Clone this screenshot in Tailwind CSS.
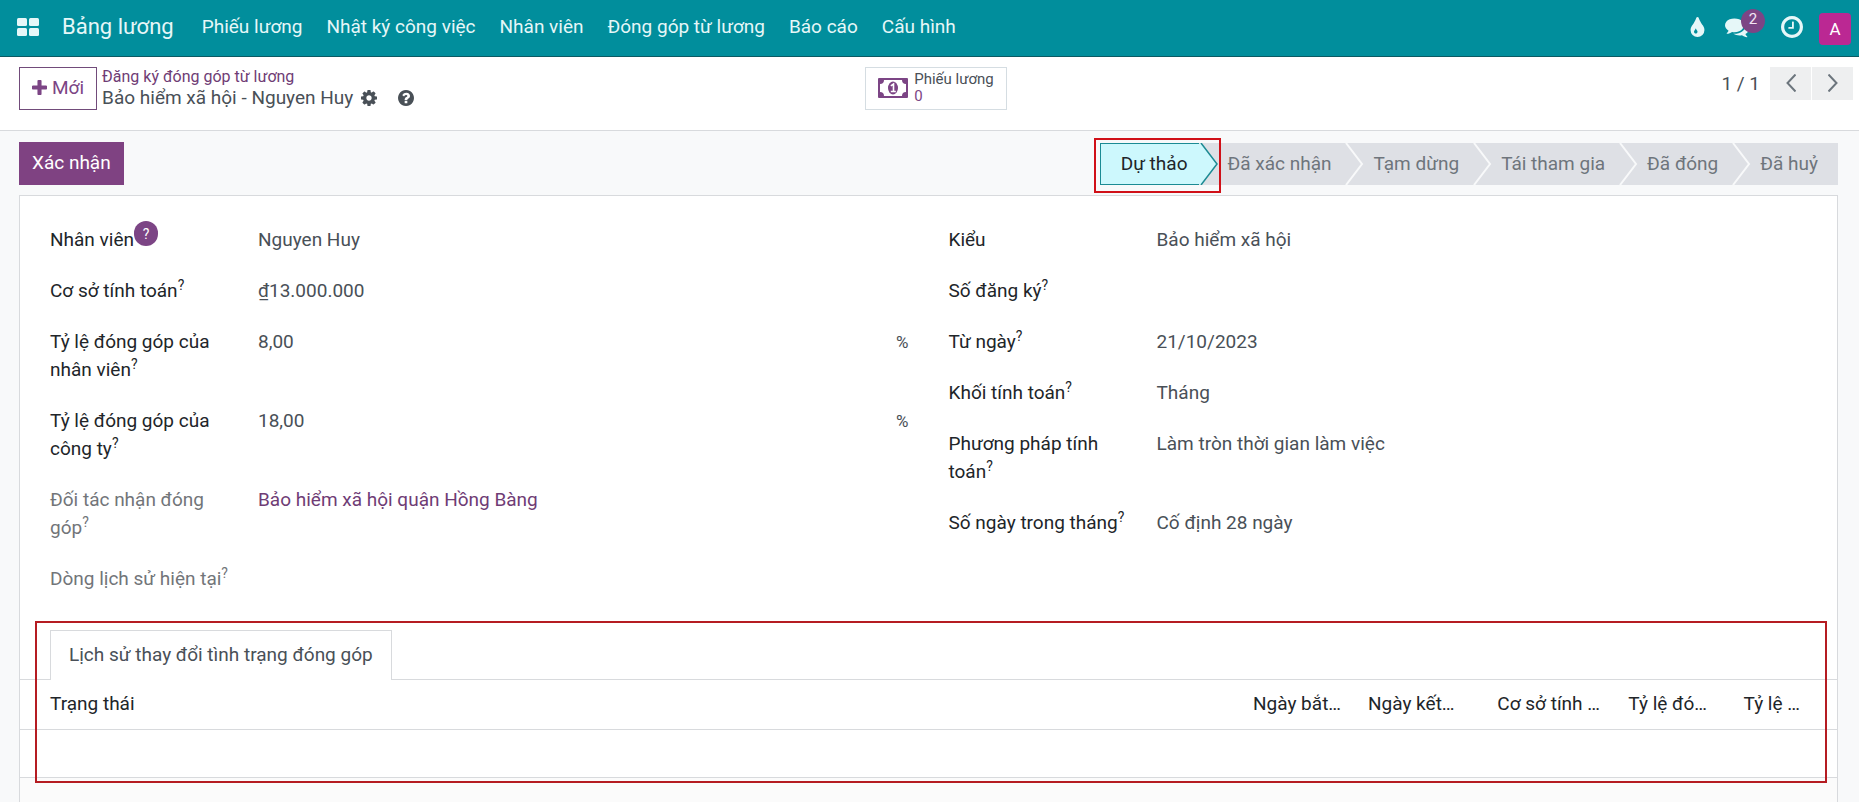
<!DOCTYPE html>
<html lang="vi">
<head>
    <meta charset="UTF-8">
    <meta name="viewport" content="width=device-width, initial-scale=1.0">
    <title>Bảo hiểm xã hội - Nguyen Huy</title>
    <script src="https://cdn.jsdelivr.net/npm/@tailwindcss/browser@4"></script>
</head>
<body class="flex min-h-screen flex-col bg-[#f8f9fa] font-[Roboto,sans-serif] text-[19px] leading-7 text-[#495057]">
    <!-- Navbar -->
    <header class="flex h-[57px] items-center border-b border-[#0b5a63] bg-[#018e9c] pr-2 pb-[3px] pl-[17px] text-[#e6f7f8]">
        <button type="button" aria-label="Ứng dụng" class="mr-[23px]">
            <svg class="h-[18px] w-[22px]" viewBox="0 0 22 18" fill="currentColor">
                <rect x="0" y="0" width="10" height="8" rx="1.5"/>
                <rect x="12" y="0" width="10" height="8" rx="1.5"/>
                <rect x="0" y="10" width="10" height="8" rx="1.5"/>
                <rect x="12" y="10" width="10" height="8" rx="1.5"/>
            </svg>
        </button>
        <a href="#" class="mr-7 text-[22px]">Bảng lương</a>
        <nav class="flex gap-6">
            <a href="#">Phiếu lương</a>
            <a href="#">Nhật ký công việc</a>
            <a href="#">Nhân viên</a>
            <a href="#">Đóng góp từ lương</a>
            <a href="#">Báo cáo</a>
            <a href="#">Cấu hình</a>
        </nav>
        <div class="ml-auto flex items-center">
            <button type="button" aria-label="Giao diện" class="mr-5">
                <svg class="h-5 w-[15px]" viewBox="320 64 1024 1472" fill="currentColor" fill-rule="evenodd"><path d="M832 1152q0-36-20-69-1-1-15.500-22.500t-25.500-38-25-44-21-50.500q-4-16-21-16t-21 16q-7 23-21 50.500t-25 44-25.500 38-15.500 22.500q-20 33-20 69 0 53 37.500 90.500t90.500 37.500 90.500-37.500 37.500-90.500zm512-128q0 212-150 362t-362 150-362-150-150-362q0-145 81-275 6-9 62.500-90.500t101-151 99.500-178 83-201.500q9-30 34-47t51-17 51.500 17 33.500 47q28 93 83 201.500t99.500 178 101 151 62.500 90.500q81 127 81 275z"/></svg>
            </button>
            <button type="button" aria-label="Tin nhắn" class="relative mr-8">
                <svg class="size-6" viewBox="0 0 1792 1792" fill="currentColor"><path d="M1408 768q0 139-94 257t-256.500 186.500-353.500 68.500q-86 0-176-16-124 88-278 128-36 9-86 16h-3q-11 0-20.500-8t-11.500-21q-1-3-1-6.500t.5-6.500 2-6l2.500-5 3.500-5.500 4-5 4.500-5 4-4.500q5-6 23-25t26-29.500 22.500-29 25-38.500 20.500-44q-124-72-195-177t-71-224q0-139 94-257t256.500-186.500 353.500-68.500 353.500 68.500 256.500 186.500 94 257zm384 256q0 120-71 224.500t-195 176.500q10 24 20.500 44t25 38.500 22.500 29 26 29.500 23 25q1 1 4 4.500t4.500 5 4 5 3.500 5.500l2.500 5 2 6 .5 6.500-1 6.500q-3 14-13 22t-22 7q-50-7-86-16-154-40-278-128-90 16-176 16-271 0-472-132 58 4 88 4 161 0 309-45t264-129q125-92 192-212t67-254q0-77-23-152 129 71 204 178t75 230z"/></svg>
                <span class="absolute -top-[6px] left-4 flex size-6 items-center justify-center rounded-full bg-[#7c4585] pb-1 text-[15px] text-[#f3e6f5]">2</span>
            </button>
            <button type="button" aria-label="Hoạt động" class="mr-4">
                <svg class="size-[22px]" viewBox="128 128 1536 1536" fill="currentColor"><path d="M1024 544v448q0 14-9 23t-23 9h-320q-14 0-23-9t-9-23v-64q0-14 9-23t23-9h224v-352q0-14 9-23t23-9h64q14 0 23 9t9 23zm416 352q0-148-73-273t-198-198-273-73-273 73-198 198-73 273 73 273 198 198 273 73 273-73 198-198 73-273zm224 0q0 209-103 385.500t-279.500 279.500-385.500 103-385.500-103-279.500-279.500-103-385.500 103-385.500 279.500-279.500 385.500-103 385.500 103 279.500 279.500 103 385.500z"/></svg>
            </button>
            <button type="button" class="mt-1 size-8 rounded bg-[#bb2893] text-[17px] leading-8 text-white">A</button>
        </div>
    </header>

    <!-- Control panel -->
    <div class="flex h-[74px] items-start border-b border-[#d8dadd] bg-white pt-[10px] pr-[6px] pl-[19px]">
        <div class="flex flex-1">
            <button type="button" class="flex h-[43px] items-center border border-[#714b7a] px-3 pb-[2px] text-[#7c4585]">
                <svg class="mr-[5px] size-[15px]" viewBox="192 128 1408 1408" fill="currentColor"><path d="M1600 736v192q0 40-28 68t-68 28h-416v416q0 40-28 68t-68 28h-192q-40 0-68-28t-28-68v-416h-416q-40 0-68-28t-28-68v-192q0-40 28-68t68-28h416v-416q0-40 28-68t68-28h192q40 0 68 28t28 68v416h416q40 0 68 28t28 68z"/></svg>
                Mới
            </button>
            <div class="ml-[5px]">
                <a href="#" class="block text-[16px] leading-[19px] text-[#6f3c75]">Đăng ký đóng góp từ lương</a>
                <div class="flex items-center leading-6">
                    <span>Bảo hiểm xã hội - Nguyen Huy</span>
                    <button type="button" aria-label="Tác vụ" class="ml-2">
                        <svg class="size-4" viewBox="128 128 1536 1536" fill="currentColor"><path d="M1152 896q0-106-75-181t-181-75-181 75-75 181 75 181 181 75 181-75 75-181zm512-109v222q0 12-8 23t-20 13l-185 28q-19 54-39 91 35 50 107 138 10 12 10 25t-9 23q-27 37-99 108t-94 71q-12 0-26-9l-138-108q-44 23-91 38-16 136-29 186-7 28-36 28h-222q-14 0-24.500-8.500t-11.500-21.500l-28-184q-49-16-90-37l-141 107q-10 9-25 9-14 0-25-11-126-114-165-168-7-10-7-23 0-12 8-23 15-21 51-66.500t54-70.500q-27-50-41-99l-183-27q-13-2-21-12.500t-8-23.500v-222q0-12 8-23t19-13l186-28q14-46 39-92-40-57-107-138-10-12-10-24 0-10 9-23 26-36 98.500-107.500t94.500-71.500q13 0 26 10l138 107q44-23 91-38 16-136 29-186 7-28 36-28h222q14 0 24.500 8.500t11.500 21.500l28 184q49 16 90 37l142-107q9-9 24-9 13 0 25 10 129 119 165 170 7 8 7 22 0 12-8 23-15 21-51 66.500t-54 70.500q26 50 41 98l183 28q13 2 21 12.500t8 23.500z"/></svg>
                    </button>
                    <button type="button" aria-label="Trợ giúp" class="ml-[21px]">
                        <svg class="size-4" viewBox="128 128 1536 1536" fill="currentColor"><path d="M1024 1376v-192q0-14-9-23t-23-9h-192q-14 0-23 9t-9 23v192q0 14 9 23t23 9h192q14 0 23-9t9-23zm256-672q0-88-55.500-163t-138.500-116-170-41q-243 0-371 213-15 24 8 42l132 100q7 6 19 6 16 0 25-12 53-68 86-92 34-24 86-24 48 0 85.500 26t37.500 59q0 38-20 61t-68 45q-63 28-115.500 86.500t-52.500 125.500v36q0 14 9 23t23 9h192q14 0 23-9t9-23q0-19 21.500-49.500t54.500-49.500q32-18 49-28.500t46-35 44.500-48 28-60.500 12.500-81zm384 192q0 209-103 385.500t-279.500 279.500-385.500 103-385.500-103-279.500-279.500-103-385.500 103-385.500 279.500-279.500 385.500-103 385.500 103 279.500 279.500 103 385.500z"/></svg>
                    </button>
                </div>
            </div>
        </div>
        <button type="button" class="flex h-[43px] items-center border border-[#d5dde2] px-3 pb-[2px] text-left text-[15px] leading-[17px]">
            <svg class="mr-[6px] h-5 w-[30px] text-[#7c4585]" viewBox="0 0 30 20" fill="currentColor">
                <path fill-rule="evenodd" d="M1 0h28a1 1 0 0 1 1 1v18a1 1 0 0 1-1 1H1a1 1 0 0 1-1-1V1a1 1 0 0 1 1-1zM6 2a4 4 0 0 1-4 4v8a4 4 0 0 1 4 4h18a4 4 0 0 1 4-4V6a4 4 0 0 1-4-4z"/>
                <ellipse cx="15" cy="10" rx="5" ry="6.500"/>
                <path d="M12.800 7.800L15.500 6v7.500M12.800 13.500h5" fill="none" stroke="white" stroke-width="1.600"/>
            </svg>
            <span>
                <span class="block">Phiếu lương</span>
                <span class="block text-[#7c4585]">0</span>
            </span>
        </button>
        <div class="flex flex-1 items-center justify-end">
            <span class="mr-[10px]">1 / 1</span>
            <div class="flex gap-px">
                <button type="button" aria-label="Trước" class="flex h-[33px] w-[41px] items-center justify-center bg-[#eeeff0] pb-[2px]">
                    <svg class="h-[18px] w-[10px]" viewBox="0 0 10 18" fill="none" stroke="#6c757d" stroke-width="2"><path d="M9.500 .5L1.500 9l8 8.500"/></svg>
                </button>
                <button type="button" aria-label="Sau" class="flex h-[33px] w-[41px] items-center justify-center bg-[#eeeff0] pb-[2px]">
                    <svg class="h-[18px] w-[10px]" viewBox="0 0 10 18" fill="none" stroke="#6c757d" stroke-width="2"><path d="M.5 .5l8 8.500-8 8.500"/></svg>
                </button>
            </div>
        </div>
    </div>

    <main class="flex flex-1 flex-col pr-[21px] pl-[19px]">
        <!-- Status bar -->
        <div class="flex h-16 items-center justify-between">
            <button type="button" class="h-[43px] bg-[#7f4282] px-[13px] pb-px text-white">Xác nhận</button>
            <div class="relative mt-px flex h-[42px] bg-[#dee0e5] text-[#6e757c]">
                <button type="button" aria-current="step" class="relative z-10 border border-r-0 border-[#1b8b94] bg-[#cdf8fd] pr-3 pl-5 text-[#212529]">Dự thảo
                    <svg class="absolute -top-px left-full h-[42px] w-[19px]" viewBox="0 0 19 42"><path d="M0 1h2l15.500 20L2 41H0z" fill="#cdf8fd"/><path d="M2 0l16 21L2 42" fill="none" stroke="#1b8b94" stroke-width="1.500"/></svg>
                </button>
                <button type="button" class="relative pr-[14px] pl-7">Đã xác nhận
                    <svg class="absolute top-0 left-full h-[42px] w-[19px]" viewBox="0 0 19 42" fill="none" stroke="#f8f9fa" stroke-width="2"><path d="M1 0l16 21L1 42"/></svg>
                </button>
                <button type="button" class="relative pr-[14px] pl-7">Tạm dừng
                    <svg class="absolute top-0 left-full h-[42px] w-[19px]" viewBox="0 0 19 42" fill="none" stroke="#f8f9fa" stroke-width="2"><path d="M1 0l16 21L1 42"/></svg>
                </button>
                <button type="button" class="relative pr-[14px] pl-7">Tái tham gia
                    <svg class="absolute top-0 left-full h-[42px] w-[19px]" viewBox="0 0 19 42" fill="none" stroke="#f8f9fa" stroke-width="2"><path d="M1 0l16 21L1 42"/></svg>
                </button>
                <button type="button" class="relative pr-[14px] pl-7">Đã đóng
                    <svg class="absolute top-0 left-full h-[42px] w-[19px]" viewBox="0 0 19 42" fill="none" stroke="#f8f9fa" stroke-width="2"><path d="M1 0l16 21L1 42"/></svg>
                </button>
                <button type="button" class="pr-5 pl-7">Đã huỷ</button>
                <!-- Khung đỏ quanh trạng thái hiện tại -->
                <div class="pointer-events-none absolute -top-[5px] -left-[6px] z-20 h-[55px] w-[127px] border-2 border-[#d01018]"></div>
            </div>
        </div>

        <!-- Sheet -->
        <section class="flex flex-1 flex-col border border-b-0 border-[#d8dadd] bg-white">
            <div class="grid grid-cols-2 gap-10 px-[30px] pt-[30px]">
                <dl class="grid grid-cols-[180px_1fr] content-start gap-x-7 gap-y-[23px]">
                    <dt class="text-[#212529]"><span class="relative">Nhân viên<sup class="absolute -top-[7px] left-full flex h-[25px] w-6 items-center justify-center rounded-full bg-[#7c4585] text-[14px] text-white">?</sup></span></dt>
                    <dd>Nguyen Huy</dd>
                    <dt class="text-[#212529]">Cơ sở tính toán<sup class="text-[14px]">?</sup></dt>
                    <dd>₫13.000.000</dd>
                    <dt class="text-[#212529]">Tỷ lệ đóng góp của nhân viên<sup class="text-[14px]">?</sup></dt>
                    <dd class="flex justify-between"><span>8,00</span><span class="text-[17px]">%</span></dd>
                    <dt class="text-[#212529]">Tỷ lệ đóng góp của công ty<sup class="text-[14px]">?</sup></dt>
                    <dd class="flex justify-between"><span>18,00</span><span class="text-[17px]">%</span></dd>
                    <dt class="text-[#727579]">Đối tác nhận đóng góp<sup class="text-[14px]">?</sup></dt>
                    <dd><a href="#" class="text-[#6f3c75]">Bảo hiểm xã hội quận Hồng Bàng</a></dd>
                    <dt class="text-[#727579]">Dòng lịch sử hiện tại<sup class="text-[14px]">?</sup></dt>
                    <dd></dd>
                </dl>
                <dl class="grid grid-cols-[180px_1fr] content-start gap-x-7 gap-y-[23px]">
                    <dt class="text-[#212529]">Kiểu</dt>
                    <dd>Bảo hiểm xã hội</dd>
                    <dt class="text-[#212529]">Số đăng ký<sup class="text-[14px]">?</sup></dt>
                    <dd></dd>
                    <dt class="text-[#212529]">Từ ngày<sup class="text-[14px]">?</sup></dt>
                    <dd>21/10/2023</dd>
                    <dt class="text-[#212529]">Khối tính toán<sup class="text-[14px]">?</sup></dt>
                    <dd>Tháng</dd>
                    <dt class="text-[#212529]">Phương pháp tính toán<sup class="text-[14px]">?</sup></dt>
                    <dd>Làm tròn thời gian làm việc</dd>
                    <dt class="text-[#212529]">Số ngày trong tháng<sup class="text-[14px]">?</sup></dt>
                    <dd>Cố định 28 ngày</dd>
                </dl>
            </div>

            <!-- Notebook -->
            <div class="relative mt-[37px]">
                <div class="flex border-b border-[#d8dadd] pl-[30px]" role="tablist">
                    <button type="button" role="tab" aria-selected="true" class="-mb-px h-[50px] border border-b-0 border-[#d8dadd] bg-white px-[18px] pb-[2px]">Lịch sử thay đổi tình trạng đóng góp</button>
                </div>
                <table class="w-full table-fixed text-left text-[#212529]">
                    <thead>
                        <tr class="h-[49px] border-b border-[#d8dadd]">
                            <th class="pl-[30px] font-normal">Trạng thái</th>
                            <th class="w-[115px] font-normal">Ngày bắt…</th>
                            <th class="w-[100px] font-normal">Ngày kết…</th>
                            <th class="w-[132px] text-right font-normal">Cơ sở tính …</th>
                            <th class="w-[107px] text-right font-normal">Tỷ lệ đó…</th>
                            <th class="w-[130px] pr-[37px] text-right font-normal">Tỷ lệ …</th>
                        </tr>
                    </thead>
                    <tbody>
                        <tr class="h-12 border-b border-[#d8dadd]"><td colspan="6"></td></tr>
                    </tbody>
                </table>
                <!-- Khung đỏ quanh tab lịch sử -->
                <div class="pointer-events-none absolute -top-[9px] right-[10px] -bottom-[5px] left-[15px] border-2 border-[#b51c22]"></div>
            </div>
            <div class="flex-1 bg-[#fbfbfb]"></div>
        </section>
    </main>
</body>
</html>
